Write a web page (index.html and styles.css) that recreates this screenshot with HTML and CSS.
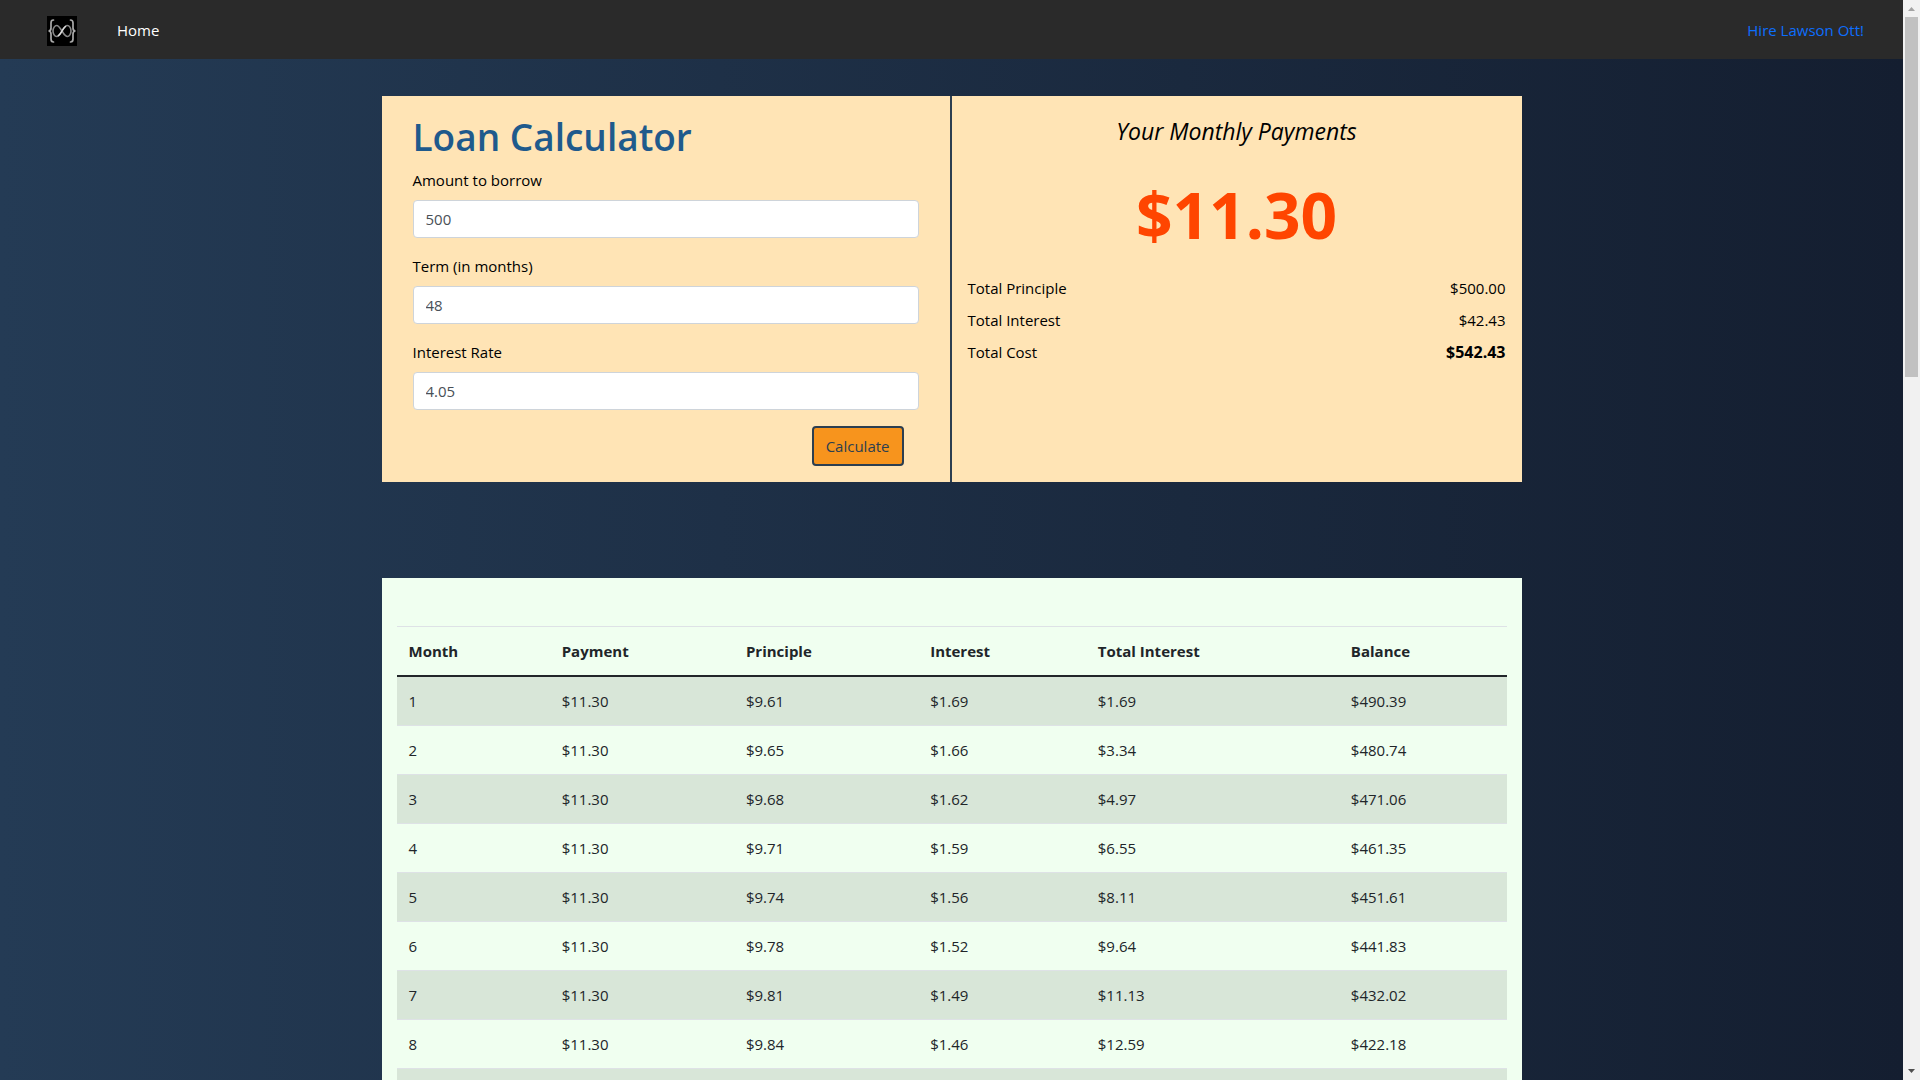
FILE: index.html
```html
<!DOCTYPE html>
<html lang="en">
<head>
<meta charset="utf-8">
<title>Loan Calculator</title>
<link rel="stylesheet" href="styles.css">
</head>
<body>
<div class="viewport">
  <div class="page">
    <nav class="navbar">
      <a class="brand" href="#" aria-label="Home page">
        <svg class="logo" viewBox="0 0 30 30" fill="none" stroke-linecap="round">
          <rect width="30" height="30" fill="#000"/>
          <path d="M6.500 4C4.500 4 4 5 4 7v5c0 2-1 3-2.500 3C3 15 4 16 4 18v5c0 2 .5 3 2.500 3M23.500 4c2 0 2.500 1 2.500 3v5c0 2 1 3 2.500 3-1.500 0-2.500 1-2.500 3v5c0 2-.5 3-2.500 3" stroke="#aaa" stroke-width="1.700"/>
          <path d="M15 15C12.500 11 11.500 9.500 9.700 9.500S6 12 6 15s1.700 5.500 3.700 5.500S13 18.500 15 15s3.300-5.500 5.300-5.500S24 12 24 15s-1.700 5.500-3.700 5.500S17.500 19 15 15z" stroke="#888" stroke-width="1.600"/>
          <path d="M11.500 19.500c1.500-1 2.500-3 3.500-4.500s2-3.500 3.500-4.500" stroke="#ddd" stroke-width="1.500"/>
        </svg>
      </a>
      <a class="nav-link" href="#">Home</a>
      <a class="nav-link hire" href="#">Hire Lawson Ott!</a>
    </nav>

    <main class="container">
      <section class="calculator">
        <form class="panel form-panel">
          <h1 class="title">Loan Calculator</h1>
          <label class="label" for="amount">Amount to borrow</label>
          <input class="field" id="amount" type="text" value="500">
          <label class="label" for="term">Term (in months)</label>
          <input class="field" id="term" type="text" value="48">
          <label class="label" for="rate">Interest Rate</label>
          <input class="field" id="rate" type="text" value="4.05">
          <button class="calculate" type="button">Calculate</button>
        </form>
        <div class="panel result-panel">
          <h2 class="result-title">Your Monthly Payments</h2>
          <p class="payment">$11.30</p>
          <dl class="totals">
            <div class="total"><dt>Total Principle</dt><dd>$500.00</dd></div>
            <div class="total"><dt>Total Interest</dt><dd>$42.43</dd></div>
            <div class="total"><dt>Total Cost</dt><dd class="strong">$542.43</dd></div>
          </dl>
        </div>
      </section>

      <section class="schedule">
        <table class="table">
          <colgroup>
            <col class="col-month"><col class="col-payment"><col class="col-principle">
            <col class="col-interest"><col class="col-total"><col class="col-balance">
          </colgroup>
          <thead>
            <tr><th>Month</th><th>Payment</th><th>Principle</th><th>Interest</th><th>Total Interest</th><th>Balance</th></tr>
          </thead>
          <tbody>
            <tr><td>1</td><td>$11.30</td><td>$9.61</td><td>$1.69</td><td>$1.69</td><td>$490.39</td></tr>
            <tr><td>2</td><td>$11.30</td><td>$9.65</td><td>$1.66</td><td>$3.34</td><td>$480.74</td></tr>
            <tr><td>3</td><td>$11.30</td><td>$9.68</td><td>$1.62</td><td>$4.97</td><td>$471.06</td></tr>
            <tr><td>4</td><td>$11.30</td><td>$9.71</td><td>$1.59</td><td>$6.55</td><td>$461.35</td></tr>
            <tr><td>5</td><td>$11.30</td><td>$9.74</td><td>$1.56</td><td>$8.11</td><td>$451.61</td></tr>
            <tr><td>6</td><td>$11.30</td><td>$9.78</td><td>$1.52</td><td>$9.64</td><td>$441.83</td></tr>
            <tr><td>7</td><td>$11.30</td><td>$9.81</td><td>$1.49</td><td>$11.13</td><td>$432.02</td></tr>
            <tr><td>8</td><td>$11.30</td><td>$9.84</td><td>$1.46</td><td>$12.59</td><td>$422.18</td></tr>
            <tr><td>9</td><td>$11.30</td><td>$9.88</td><td>$1.42</td><td>$14.01</td><td>$412.30</td></tr>
          </tbody>
        </table>
      </section>
    </main>
  </div>
  <div class="scrollbar" aria-hidden="true">
    <svg class="arrow" viewBox="0 0 17 17"><path d="M5 11h7L8.500 7z" fill="#a3a3a3"/></svg>
    <div class="track"><div class="thumb"></div></div>
    <svg class="arrow" viewBox="0 0 17 17"><path d="M5 6h7l-3.500 4z" fill="#505050"/></svg>
  </div>
</div>
</body>
</html>
```
FILE: styles.css
```css
* { box-sizing: border-box; }

body {
  margin: 0;
  font-family: "Open Sans", "Noto Sans", sans-serif;
  font-size: 15px;
  line-height: 24px;
  color: #212529;
}

.viewport {
  display: flex;
  height: 100vh;
  overflow: hidden;
}

.page {
  flex: 1;
  min-width: 0;
  overflow: hidden;
  background: linear-gradient(to right, #243b55, #141e30);
}

.navbar {
  display: flex;
  align-items: center;
  height: 59px;
  padding: 0 39px 0 47px;
  background: #2a2a2a;
}

.brand { display: flex; margin: 2px 40px 0 0; }
.logo { width: 30px; height: 30px; }
.nav-link { color: #fff; text-decoration: none; }
.hire { margin-left: auto; color: #0d6efd; }

.container {
  display: flex;
  flex-direction: column;
  gap: 96px;
  max-width: 1140px;
  margin: 37px auto 0;
}

.calculator {
  display: grid;
  grid-template-columns: 1fr 1fr;
  background: #ffe4b5;
  color: #000;
}

.panel { padding: 16px; }

.form-panel {
  display: flex;
  flex-direction: column;
  padding: 16px 31px;
  border-right: 2px solid #2c3e50;
}

.title {
  margin: 0 0 6px;
  font-size: 37px;
  font-weight: 600;
  line-height: 50px;
  color: #1f5a8c;
}

.label { margin-bottom: 8px; }

.field {
  width: 100%;
  height: 38px;
  margin: 0 0 16px;
  padding: 6px 12px;
  border: 1px solid #ced4da;
  border-radius: 4px;
  background: #fff;
  font: inherit;
  color: #495057;
}

.calculate {
  align-self: flex-end;
  height: 40px;
  margin-right: 15px;
  padding: 6px 12px;
  border: 2px solid #2c3e50;
  border-radius: 4px;
  background: #f7941d;
  font: inherit;
  color: #2c3e50;
}

.result-title {
  margin: 0 0 33px;
  font-size: 23px;
  font-style: italic;
  font-weight: 400;
  line-height: 38px;
  text-align: center;
}

.payment {
  margin: 0 0 25px;
  font-size: 64px;
  font-weight: 700;
  line-height: 64px;
  text-align: center;
  color: #ff4500;
}

.totals { margin: 0; }

.total {
  display: flex;
  justify-content: space-between;
  line-height: 32px;
}

.total dd { margin: 0; }
.total .strong { font-size: 16px; font-weight: 700; }

.schedule {
  padding: 48px 15px;
  background: #f0fff0;
}

.table {
  width: 100%;
  table-layout: fixed;
  border-spacing: 0;
  text-align: left;
}

.col-month { width: 13.8%; }
.col-payment, .col-principle { width: 16.6%; }
.col-interest, .col-balance { width: 15.1%; }
.col-total { width: 22.8%; }

.table th, .table td {
  padding: 12px;
  border-top: 1px solid #dee2e6;
}

.table th {
  border-bottom: 2px solid #212529;
  font-weight: 700;
}

.table tbody tr:first-child td { border-top: 0; }
.table tbody tr:nth-child(odd) { background: #d8e6d8; }

.scrollbar {
  display: flex;
  flex-direction: column;
  width: 17px;
  background: #f1f1f1;
}

.arrow { width: 17px; height: 17px; }
.track { flex: 1; padding: 0 2px; }
.thumb { height: 360px; background: #c1c1c1; }
```
